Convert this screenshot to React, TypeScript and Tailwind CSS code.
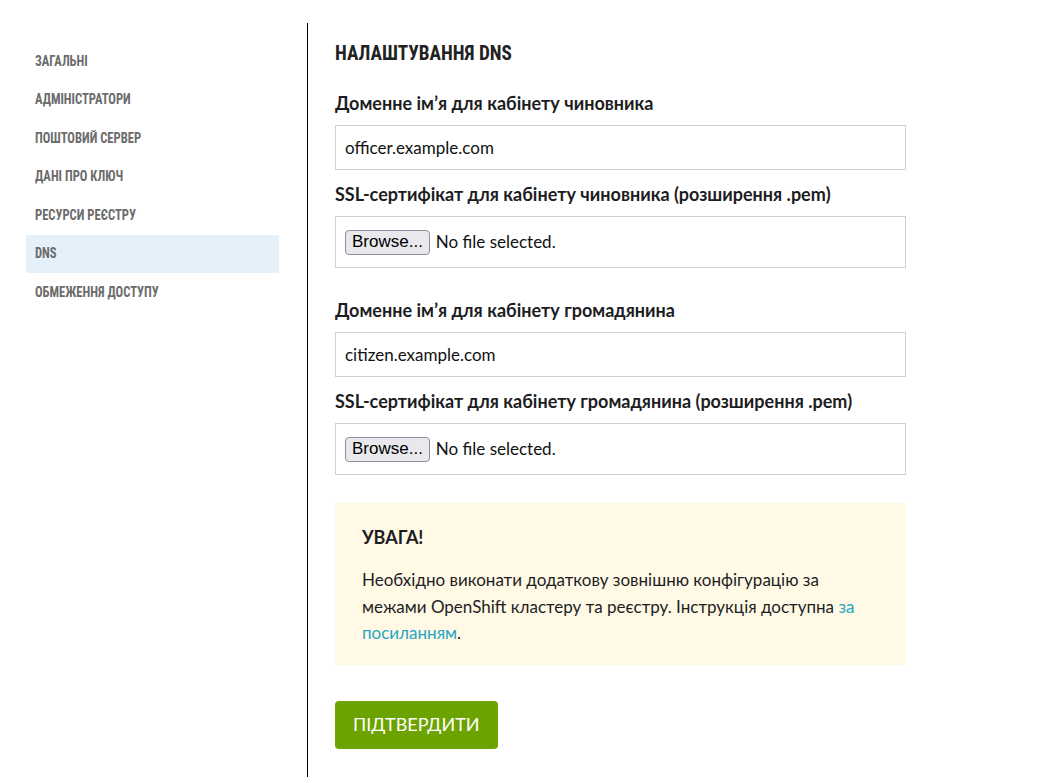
import React from "react";

const navItems = [
  "ЗАГАЛЬНІ",
  "АДМІНІСТРАТОРИ",
  "ПОШТОВИЙ СЕРВЕР",
  "ДАНІ ПРО КЛЮЧ",
  "РЕСУРСИ РЕЄСТРУ",
  "DNS",
  "ОБМЕЖЕННЯ ДОСТУПУ",
];

const condensed = "font-['Roboto_Condensed','Roboto',sans-serif]";
const body = "font-['Source_Sans_Pro','Lato','Open_Sans',sans-serif]";

function TextField({ label, value }: { label: string; value: string }) {
  return (
    <div>
      <label className="block text-[18px] font-bold leading-[22px] text-[#1d1d1f]">{label}</label>
      <div className="mt-[11px] flex h-[45px] items-center border border-[#cfcfdc] px-[9px] text-[17px] text-[#111]">
        {value}
      </div>
    </div>
  );
}

function FileField({ label }: { label: string }) {
  return (
    <div className="mt-[13px]">
      <label className="block text-[18px] font-bold leading-[22px] text-[#1d1d1f]">{label}</label>
      <div className="mt-[11px] flex h-[52px] items-center gap-[6px] border border-[#cfcfdc] px-[9px]">
        <span className="flex h-[25px] items-center rounded-[4px] border border-[#8f8f9d] bg-[#e9e9ed] px-[6px] text-[17px] text-black font-['Liberation_Sans',sans-serif]">
          Browse...
        </span>
        <span className="text-[17px] text-[#111]">No file selected.</span>
      </div>
    </div>
  );
}

export default function App() {
  return (
    <div className={`flex min-h-[783px] bg-white pt-[23px] pb-[6px] ${body}`}>
      <aside className="w-[308px] shrink-0 border-r border-black pl-[26px] pt-[19px]">
        <nav className="flex w-[253px] flex-col">
          {navItems.map((item) => (
            <a
              key={item}
              href="#"
              className={`flex h-[38.5px] items-center pl-[9px] text-[14px] font-bold text-[#6b6b6b] ${condensed} ${
                item === "DNS" ? "bg-[#e5f1fa]" : ""
              }`}
            >
              <span className="origin-left scale-x-90 whitespace-nowrap">{item}</span>
            </a>
          ))}
        </nav>
      </aside>

      <main className="w-[598px] pl-[27px] pt-[17px]">
        <h1 className={`text-[20px] font-bold leading-[26px] text-[#222] ${condensed}`}>
          <span className="inline-block origin-left scale-x-[0.96] whitespace-nowrap">НАЛАШТУВАННЯ DNS</span>
        </h1>

        <div className="mt-[26px]">
          <TextField label="Доменне імʼя для кабінету чиновника" value="officer.example.com" />
          <FileField label="SSL-сертифікат для кабінету чиновника (розширення .pem)" />
        </div>

        <div className="mt-[31px]">
          <TextField label="Доменне імʼя для кабінету громадянина" value="citizen.example.com" />
          <FileField label="SSL-сертифікат для кабінету громадянина (розширення .pem)" />
        </div>

        <div className="mt-[28px] bg-[#fff9e6] px-[27px] pt-[22px] pb-[18px]">
          <h2 className="text-[18px] font-bold leading-[24px] text-[#1d1d1f]">УВАГА!</h2>
          <p className="mt-[18px] text-[17px] leading-[26.5px] text-[#1d1d1f]">
            Необхідно виконати додаткову зовнішню конфігурацію за межами OpenShift кластеру та
            реєстру. Інструкція доступна{" "}
            <a href="#" className="text-[#25a6c2]">
              за посиланням
            </a>
            .
          </p>
        </div>

        <button className="mt-[36px] h-[48px] rounded-[4px] bg-[#6ca300] px-[18px] text-[18px] text-white">
          ПІДТВЕРДИТИ
        </button>
      </main>
    </div>
  );
}
